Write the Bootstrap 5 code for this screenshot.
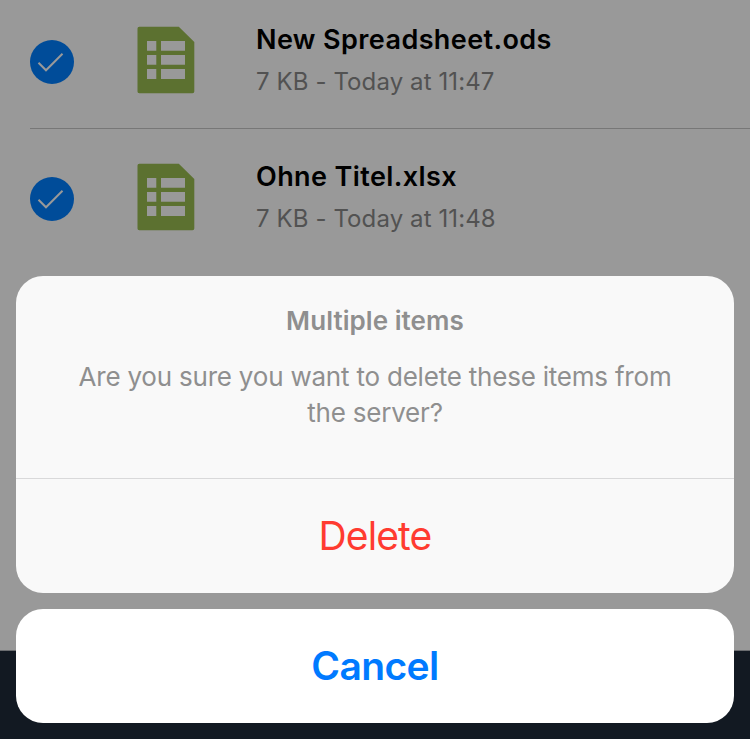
<!DOCTYPE html>
<html lang="en">
<head>
<meta charset="utf-8">
<meta name="viewport" content="width=device-width, initial-scale=1">
<title>Delete items</title>
<link href="https://cdn.jsdelivr.net/npm/bootstrap@5.3.0/dist/css/bootstrap.min.css" rel="stylesheet">
<style>
body{font-family:Inter,"Liberation Sans",sans-serif;background:#999;overflow:hidden}
.screen{height:739px}
.file-row{height:137px;margin-left:30px}
.file-row:first-child{height:129px;border-bottom:1px solid #777}
.file-row:first-child .file-body{padding-top:17px}
.file-body{padding-top:25px}
.check-icon{width:44px;height:44px;margin-top:23px}
.doc-icon{width:58px;height:68px;margin:9px 0 0 63px}
.file-text{margin:5px 0 0 61px}
.file-name{font-size:27px;line-height:36px;font-weight:600;color:#000;letter-spacing:.4px}
.file-meta{font-size:24px;line-height:32px;color:#525252;margin-top:8px;letter-spacing:.1px}
.bottom-bar{height:89px;background:#121922;border-top:1px solid #6b6d70}
.sheet{padding:0 16px 16px}
.sheet-box{border-radius:27px;overflow:hidden}
.prompt{height:203px;background:#f9f9f9;border-bottom:1px solid #d9d9da;padding-top:27px;color:#8f8f8f}
.prompt-title{font-size:26px;line-height:36px;font-weight:600;margin:0 0 20px;letter-spacing:.07px}
.prompt-text{font-size:26px;line-height:36px;margin:0;letter-spacing:-.21px}
.sheet-btn{height:114px;border:0;font-size:39px;line-height:48px;padding:0}
.sheet-btn.del{background:#f9f9f9;color:#ff3b30;letter-spacing:-.9px}
.sheet-btn.cancel{background:#fff;color:#007aff;font-weight:600;letter-spacing:-.6px}
</style>
</head>
<body>
<svg class="d-none" xmlns="http://www.w3.org/2000/svg">
<symbol id="check" viewBox="0 0 44 44"><circle cx="22" cy="22" r="22" fill="#004c99"/><path d="M8.5 22.8 16 30.3 32.5 13.8" fill="none" stroke="#999" stroke-width="2"/></symbol>
<symbol id="sheet" viewBox="0 0 58 68"><path fill="#5c7130" fill-rule="evenodd" d="M2.3.7H41.8L57.3 16V65.5a1.8 1.8 0 0 1-1.8 1.8H2.3A1.8 1.8 0 0 1 .5 65.5V2.5A1.8 1.8 0 0 1 2.3.7ZM10 15v9.7h9.3V15ZM24 15v9.7h24V15ZM10 29v9.7h9.3V29ZM24 29v9.7h24V29ZM10 43.1v9.9h9.3v-9.9ZM24 43.1v9.9h24v-9.9Z"/></symbol>
</svg>
<div class="screen position-relative d-flex flex-column">
  <main class="flex-grow-1">
    <div class="file-row"><div class="file-body d-flex align-items-start">
      <svg class="check-icon flex-shrink-0"><use href="#check"/></svg>
      <svg class="doc-icon flex-shrink-0"><use href="#sheet"/></svg>
      <div class="file-text"><div class="file-name">New Spreadsheet.ods</div><div class="file-meta">7 KB - Today at 11:47</div></div>
    </div></div>
    <div class="file-row"><div class="file-body d-flex align-items-start">
      <svg class="check-icon flex-shrink-0"><use href="#check"/></svg>
      <svg class="doc-icon flex-shrink-0"><use href="#sheet"/></svg>
      <div class="file-text"><div class="file-name">Ohne Titel.xlsx</div><div class="file-meta">7 KB - Today at 11:48</div></div>
    </div></div>
  </main>
  <div class="bottom-bar"></div>
  <div class="sheet position-absolute bottom-0 start-0 w-100 d-flex flex-column gap-3" role="dialog">
    <div class="sheet-box">
      <div class="prompt text-center"><h1 class="prompt-title">Multiple items</h1><p class="prompt-text">Are you sure you want to delete these items from<br>the server?</p></div>
      <button class="sheet-btn del d-block w-100">Delete</button>
    </div>
    <button class="sheet-btn cancel sheet-box d-block w-100">Cancel</button>
  </div>
</div>
<script src="https://cdn.jsdelivr.net/npm/bootstrap@5.3.0/dist/js/bootstrap.bundle.min.js"></script>
</body>
</html>
